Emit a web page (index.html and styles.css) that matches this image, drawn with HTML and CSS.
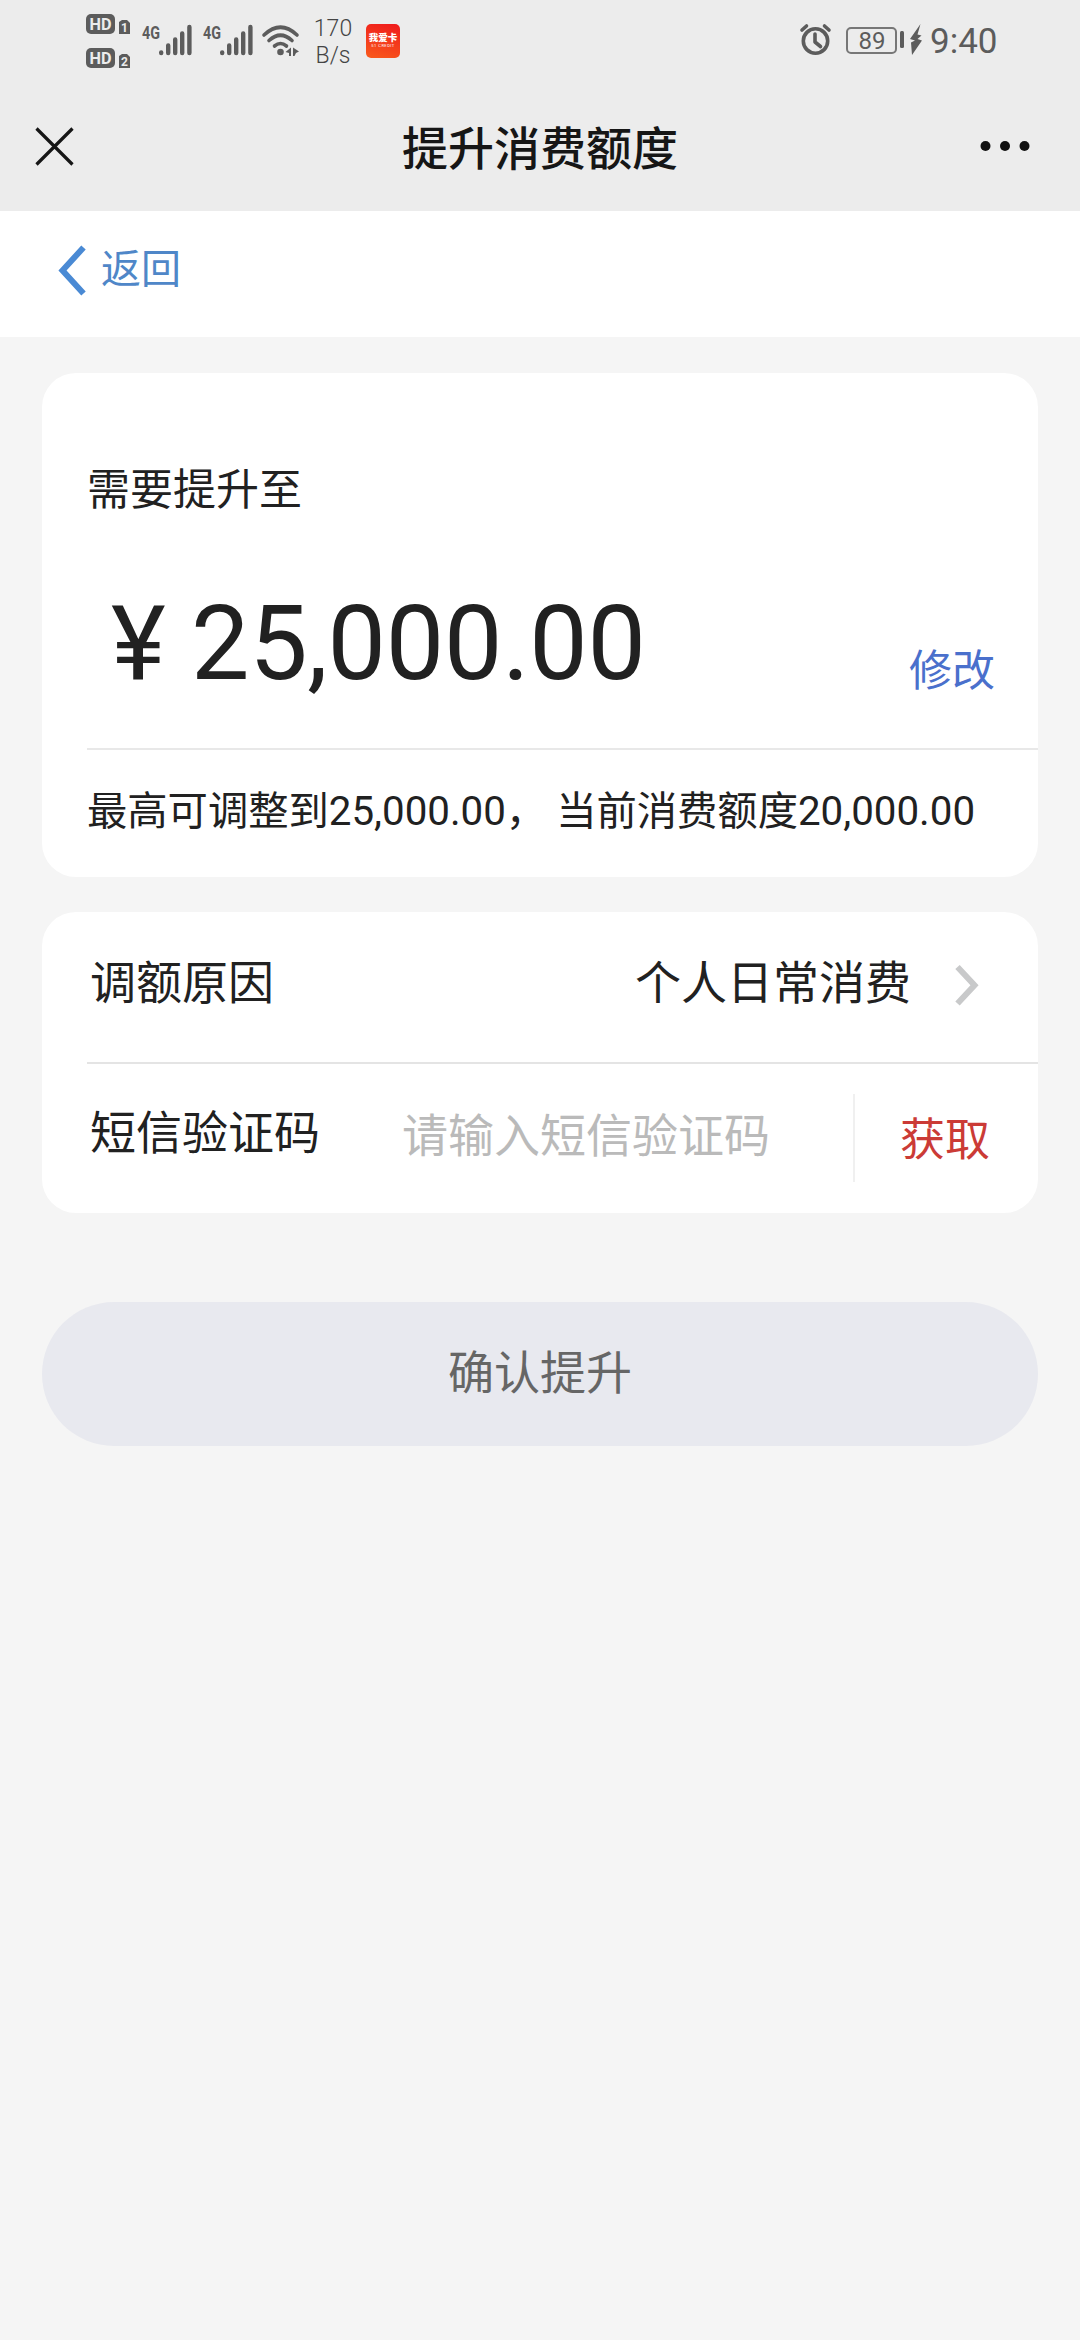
FILE: index.html
```html
<!DOCTYPE html>
<html lang="zh-CN">
<head>
<meta charset="utf-8">
<title>提升消费额度</title>
<link rel="stylesheet" href="styles.css">
</head>
<body>
<header class="top">
  <div class="status">
    <svg class="hd" width="45" height="56" viewBox="0 0 45 56">
      <g fill="#5c5c5c">
        <rect x="0" y="0" width="29" height="20" rx="5"/>
        <path d="M33 8l3-2h5l3 3v11H33z"/>
        <rect x="0" y="34" width="29" height="20" rx="5"/>
        <path d="M33 42l3-2h5l3 3v11H33z"/>
      </g>
      <g class="hd-text">
        <text x="14.5" y="16" font-size="17" textLength="22" lengthAdjust="spacingAndGlyphs">HD</text>
        <text x="38.5" y="18" font-size="12">1</text>
        <text x="14.5" y="50" font-size="17" textLength="22" lengthAdjust="spacingAndGlyphs">HD</text>
        <text x="38.5" y="52" font-size="12">2</text>
      </g>
    </svg>
    <svg class="signal" width="51" height="34" viewBox="0 0 51 34">
      <text class="net" x="0" y="14.500" textLength="18" lengthAdjust="spacingAndGlyphs">4G</text>
      <g stroke="#5c5c5c" stroke-width="4.4" stroke-linecap="round">
        <path d="M19.2 29v-.5M26.2 29v-7.500M33.200 29V15.500M40.200 29V9.500M47.400 29V3"/>
      </g>
    </svg>
    <svg class="signal" width="51" height="34" viewBox="0 0 51 34">
      <text class="net" x="0" y="14.500" textLength="18" lengthAdjust="spacingAndGlyphs">4G</text>
      <g stroke="#5c5c5c" stroke-width="4.4" stroke-linecap="round">
        <path d="M19.2 29v-.5M26.2 29v-7.500M33.200 29V15.500M40.200 29V9.500M47.400 29V3"/>
      </g>
    </svg>
    <svg class="wifi" width="38" height="32" viewBox="0 0 38 32">
      <g fill="none" stroke="#5c5c5c" stroke-width="3.6" stroke-linecap="round">
        <path d="M2 10Q18.500-5.500 35 10M7 15.500Q18.500 5 30 15.500M12.500 21Q18.500 16 24.500 21"/>
      </g>
      <g fill="#5c5c5c"><circle cx="18.500" cy="27" r="3.300"/><path d="M23.500 27l5.500-4.500V31h-2v-3zM31 22.500l6 4-3 1.500-1.500 3H31z"/></g>
    </svg>
    <div class="rate"><span>170</span><span>B/s</span></div>
    <div class="app"><b>我爱卡</b><i>51 CREDIT</i></div>
    <div class="right">
      <svg width="32" height="32" viewBox="0 0 32 32" fill="none" stroke="#5c5c5c">
        <circle cx="15.500" cy="17" r="12.200" stroke-width="3.600"/>
        <path d="M15 10v8l5.500 4.500" stroke-width="3.600" stroke-linecap="round" stroke-linejoin="round"/>
        <path d="M2 6L6.500 2M29 6L24.500 2" stroke-width="3.600" stroke-linecap="round"/>
      </svg>
      <div class="battery">89</div>
      <svg class="charge" width="22" height="32" viewBox="0 0 22 32" fill="#5c5c5c">
        <rect x="0" y="7" width="4" height="17" rx="1.500"/>
        <path d="M20.500 0L10 15l5 1.500-4 2L12 31 22 16.500l-4.500-1.500 4-3.500-4-1z"/>
      </svg>
      <span class="clock">9:40</span>
    </div>
  </div>
  <div class="nav">
    <svg width="41" height="41" viewBox="0 0 41 41"><path d="M2.500 2.500l36 36M38.500 2.500l-36 36" stroke="#161616" stroke-width="3.200"/></svg>
    <h1>提升消费额度</h1>
    <svg width="52" height="12" viewBox="0 0 52 12" fill="#111"><circle cx="6.500" cy="6" r="5"/><circle cx="26" cy="6" r="5"/><circle cx="45.500" cy="6" r="5"/></svg>
  </div>
</header>
<div class="back">
  <svg width="28" height="50" viewBox="0 0 28 50"><path d="M25.500 2.500L4.500 25.500l21 23" fill="none" stroke="#4a8ad4" stroke-width="6"/></svg>
  <span>返回</span>
</div>
<main>
  <section class="card limit">
    <div class="label">需要提升至</div>
    <div class="amount-row"><span class="amount">¥ 25,000.00</span><a class="edit">修改</a></div>
    <div class="note">最高可调整到25,000.00， 当前消费额度20,000.00</div>
  </section>
  <section class="card form">
    <div class="row">
      <span class="name">调额原因</span>
      <span class="value">个人日常消费</span>
      <svg width="28" height="42" viewBox="0 0 28 42"><path d="M3.500 4L20.500 22.200 3.500 40.500" fill="none" stroke="#c8c9ca" stroke-width="6"/></svg>
    </div>
    <div class="row code">
      <span class="name">短信验证码</span>
      <span class="hint">请输入短信验证码</span>
      <a class="get">获取</a>
    </div>
  </section>
  <div class="submit">确认提升</div>
</main>
</body>
</html>
```

FILE: styles.css
```css
* { box-sizing: border-box; }
body {
  margin: 0;
  min-height: 2340px;
  background: #f5f5f5;
  color: #212121;
  font-family: Roboto, "Noto Sans CJK SC", sans-serif;
}
svg { display: block; flex: none; overflow: visible; }
.top { height: 211px; background: #ececec; }
.status { display: flex; height: 80px; padding: 0 87px 0 86px; align-items: flex-start; color: #5c5c5c; }
.hd { margin-top: 14px; }
.hd-text { fill: #ececec; font-weight: 700; text-anchor: middle; }
.net { fill: #5c5c5c; font-size: 18px; font-weight: 700; }
.signal { margin: 24px 0 0 11px; }
.signal + .signal { margin-left: 10px; }
.wifi { margin: 25px 0 0 8px; }
.rate { display: flex; flex-direction: column; margin: 15px 0 0 13px; width: 40px; font-size: 23px; line-height: 27px; align-items: center; font-weight: 300; color: #444; }
.app {
  display: flex; flex-direction: column; align-items: center;
  width: 34px; height: 34px; margin: 24px 0 0 13px; padding-top: 8px;
  border-radius: 5px; background: linear-gradient(15deg, #f95a1c, #ef1a1c);
  color: #fff; font-size: 9.500px; line-height: 12px; white-space: nowrap;
}
.app b { font-weight: 900; }
.app i { font-style: normal; font-size: 4px; line-height: 4px; letter-spacing: 0.5px; }
.right { display: flex; margin: 24px -1px 0 auto; }
.battery {
  width: 51px; height: 27px; margin: 3px 3px 0 14px; padding-left: 1px;
  border: 2px solid #777; border-radius: 5px;
  font-size: 24px; line-height: 24px; text-align: center;
}
.charge { margin-right: 8px; }
.clock { font-size: 35px; line-height: 35px; width: 64px; white-space: nowrap; }
.nav { display: flex; height: 132px; padding: 0 49px 0 34px; align-items: center; }
.nav h1 { flex: 1; margin: 5px 0 0 327px; font-size: 46px; line-height: 60px; font-weight: 500; color: #161616; }
.back { display: flex; height: 126px; padding: 34px 0 0 58px; gap: 15px; background: #fff; color: #4f87c8; font-size: 40px; line-height: 49px; }
main { display: flex; flex-direction: column; padding: 36px 42px; }
.card { border-radius: 34px; background: #fff; overflow: hidden; }
.limit { height: 504px; padding-left: 45px; }
.label { padding-top: 90px; font-size: 43px; line-height: 54px; }
.amount-row { display: flex; height: 233px; padding: 0 43px 0 24px; justify-content: space-between; border-bottom: 2px solid #e8e8e8; }
.amount { padding-top: 67px; font-size: 104px; line-height: 120px; letter-spacing: -0.25px; white-space: pre; }
.edit { padding-top: 127px; font-size: 43px; line-height: 54px; color: #4a70cc; }
.note { padding-top: 37px; font-size: 40.300px; line-height: 50px; white-space: pre; }
.form { height: 301px; margin-top: 35px; padding-left: 45px; font-size: 46px; line-height: 60px; }
.row { display: flex; height: 152px; padding: 41px 56px 0 3px; border-bottom: 2px solid #e4e4e4; }
.row svg { margin: 10px 0 0 43px; }
.value { margin-left: auto; }
.code { padding-right: 0; border: 0; height: 149px; padding-top: 39px; }
.hint { margin: 3px 0 0 82px; color: #bababa; }
.get { height: 88px; margin: -9px 0 0 auto; width: 185px; padding: 17px 0 0 45px; border-left: 2px solid #f0f0f0; font-size: 45px; color: #cb3b36; }
.submit { height: 144px; margin-top: 89px; border-radius: 72px; background: #e8e9ef; color: #666; text-align: center; font-size: 46px; line-height: 142px; }
```
